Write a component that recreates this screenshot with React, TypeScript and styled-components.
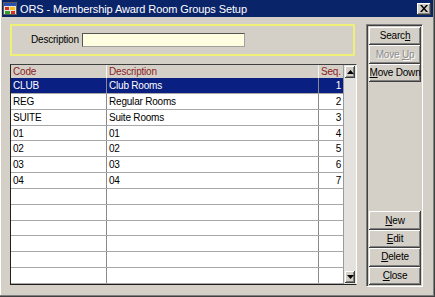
import React from "react";
import styled, { createGlobalStyle, css } from "styled-components";

const GlobalStyle = createGlobalStyle`
  html, body {
    margin: 0;
    padding: 0;
    background: #d4d0c8;
  }
  body {
    font-family: "Liberation Sans", Arial, sans-serif;
    font-size: 10px;
    letter-spacing: -0.2px;
    color: #000;
  }
`;

const face = "#d4d0c8";
const shadow = "#808080";
const darkShadow = "#404040";

const Frame = styled.div`
  width: 435px;
  height: 297px;
  box-sizing: border-box;
  padding: 0 2px 2px 2px;
  background: ${face};
  box-shadow: inset -1px -1px ${darkShadow}, inset -2px -2px ${shadow},
    inset 1px 0 #ffffff;
  display: flex;
  flex-direction: column;
`;

const TitleBar = styled.div`
  height: 17px;
  background: #0a246a;
  display: flex;
  align-items: center;
  padding: 0 2px 0 1px;
  gap: 2px;
`;

const TitleText = styled.div`
  flex: 1;
  color: #ffffff;
  font-size: 11px;
  letter-spacing: -0.1px;
  white-space: nowrap;
`;

const CloseBox = styled.div`
  width: 14px;
  height: 12px;
  background: ${face};
  box-shadow: inset -1px -1px ${darkShadow}, inset 1px 1px #ffffff,
    inset -2px -2px ${shadow};
  display: flex;
  align-items: center;
  justify-content: center;
`;

const Body = styled.div`
  flex: 1;
  display: flex;
  padding: 7px 10px 8px 8px;
  gap: 9px;
`;

const LeftColumn = styled.div`
  width: 347px;
  display: flex;
  flex-direction: column;
  gap: 8px;
`;

const SearchBox = styled.div`
  width: 345px;
  height: 32px;
  box-sizing: border-box;
  border: 2px solid #f0ef78;
  display: flex;
  align-items: center;
  padding: 0 0 1px 19px;
  gap: 3px;
`;

const Label = styled.label`
  font-size: 10px;
`;

const TextInput = styled.div`
  width: 163px;
  height: 14px;
  box-sizing: border-box;
  background: #fffee0;
  border: 1px solid;
  border-color: #555555 #a0a0a0 #a0a0a0 #555555;
`;

const Grid = styled.div`
  height: 221px;
  box-sizing: border-box;
  border: 1px solid;
  border-color: #404040 #ffffff #202020 #202020;
  display: flex;
  background: #ffffff;
`;

const RowsArea = styled.div`
  flex: 1;
  display: flex;
  flex-direction: column;
`;

const Row = styled.div<{ $header?: boolean; $selected?: boolean }>`
  display: grid;
  grid-template-columns: 96px 212px 24px;
  height: 15.85px;
  box-sizing: border-box;
  border-bottom: 1px solid #a8a8a8;
  ${({ $header }) =>
    $header &&
    css`
      height: 13px;
      background: ${face};
      border-bottom: none;
      color: #8c1c1c;
    `}
  ${({ $selected }) =>
    $selected &&
    css`
      background: #0a1f82;
      color: #ffffff;
    `}
`;

const Cell = styled.div<{ $right?: boolean; $header?: boolean }>`
  padding: 0 2px 0 2px;
  line-height: 15px;
  white-space: nowrap;
  overflow: hidden;
  border-right: 1px solid ${({ $header }) => ($header ? "#f4f4f4" : "#8a8a8a")};
  text-align: ${({ $right }) => ($right ? "right" : "left")};
  ${({ $header }) =>
    $header &&
    css`
      line-height: 13px;
    `}
  &:last-child {
    border-right: none;
  }
`;

const ScrollBar = styled.div`
  width: 13px;
  background: #e4e2de;
  border-left: 1px solid #9a9a9a;
  box-sizing: border-box;
  display: flex;
  flex-direction: column;
  justify-content: space-between;
  padding: 1px;
`;

const ScrollButton = styled.div`
  height: 12px;
  background: ${face};
  box-shadow: inset -1px -1px ${darkShadow}, inset 1px 1px #ffffff,
    inset -2px -2px ${shadow};
  display: flex;
  align-items: center;
  justify-content: center;
`;

const ButtonPanel = styled.div`
  width: 57px;
  box-sizing: border-box;
  border: 1px solid;
  border-color: #808080 #ffffff #ffffff #808080;
  box-shadow: inset 1px 1px #404040;
  padding: 2px 1px 1px 2px;
  display: flex;
  flex-direction: column;
`;

const ButtonGroup = styled.div<{ $bottom?: boolean }>`
  display: flex;
  flex-direction: column;
  margin-top: ${({ $bottom }) => ($bottom ? "auto" : "0")};
`;

const Button = styled.div<{ $disabled?: boolean }>`
  height: 18.4px;
  box-sizing: border-box;
  background: ${face};
  box-shadow: inset -1px -1px ${darkShadow}, inset 1px 1px #ffffff,
    inset -2px -2px ${shadow};
  display: flex;
  align-items: center;
  justify-content: center;
  padding-bottom: 1px;
  font-size: 10px;
  white-space: pre;
  ${({ $disabled }) =>
    $disabled &&
    css`
      color: #8c8c8c;
      text-shadow: 1px 1px #ffffff;
    `}
`;

const Key = styled.span`
  text-decoration: underline;
`;

type Item = { code: string; description: string; seq: string };

const items: Item[] = [
  { code: "CLUB", description: "Club Rooms", seq: "1" },
  { code: "REG", description: "Regular Rooms", seq: "2" },
  { code: "SUITE", description: "Suite Rooms", seq: "3" },
  { code: "01", description: "01", seq: "4" },
  { code: "02", description: "02", seq: "5" },
  { code: "03", description: "03", seq: "6" },
  { code: "04", description: "04", seq: "7" },
];

const rows: Item[] = [
  ...items,
  ...Array.from({ length: 6 }, () => ({ code: "", description: "", seq: "" })),
];

const AppIcon = () => (
  <svg width="15" height="15" viewBox="0 0 15 15">
    <rect x="0.5" y="1.5" width="13" height="12" fill="#e8e4d8" stroke="#5a5a5a" />
    <rect x="1" y="2" width="12" height="3" fill="#2a50b0" />
    <rect x="2" y="6" width="4" height="3" fill="#d83020" />
    <rect x="7" y="6" width="5" height="3" fill="#f0c020" />
    <rect x="2" y="10" width="5" height="3" fill="#30a030" />
    <rect x="8" y="10" width="4" height="3" fill="#d83020" />
  </svg>
);

const CloseGlyph = () => (
  <svg width="8" height="7" viewBox="0 0 8 7">
    <path d="M0 0h2l2 2.5L6 0h2L5 3.5 8 7H6L4 4.5 2 7H0l3-3.5z" fill="#000" />
  </svg>
);

const Arrow = ({ up }: { up?: boolean }) => (
  <svg width="7" height="4" viewBox="0 0 7 4">
    <path d={up ? "M3.5 0L7 4H0z" : "M0 0h7L3.5 4z"} fill="#000" />
  </svg>
);

export default function App() {
  return (
    <>
      <GlobalStyle />
      <Frame>
        <TitleBar>
          <AppIcon />
          <TitleText>ORS - Membership Award Room Groups Setup</TitleText>
          <CloseBox>
            <CloseGlyph />
          </CloseBox>
        </TitleBar>
        <Body>
          <LeftColumn>
            <SearchBox>
              <Label>Description</Label>
              <TextInput />
            </SearchBox>
            <Grid>
              <RowsArea>
                <Row $header>
                  <Cell $header>Code</Cell>
                  <Cell $header>Description</Cell>
                  <Cell $header>Seq.</Cell>
                </Row>
                {rows.map((r, i) => (
                  <Row key={i} $selected={i === 0}>
                    <Cell>{r.code}</Cell>
                    <Cell>{r.description}</Cell>
                    <Cell $right>{r.seq}</Cell>
                  </Row>
                ))}
              </RowsArea>
              <ScrollBar>
                <ScrollButton>
                  <Arrow up />
                </ScrollButton>
                <ScrollButton>
                  <Arrow />
                </ScrollButton>
              </ScrollBar>
            </Grid>
          </LeftColumn>
          <ButtonPanel>
            <ButtonGroup>
              <Button>
                Searc<Key>h</Key>
              </Button>
              <Button $disabled>
                {"Move "}
                <Key>U</Key>p
              </Button>
              <Button>
                <Key>M</Key>
                {"ove Down"}
              </Button>
            </ButtonGroup>
            <ButtonGroup $bottom>
              <Button>
                <Key>N</Key>ew
              </Button>
              <Button>
                <Key>E</Key>dit
              </Button>
              <Button>
                <Key>D</Key>elete
              </Button>
              <Button>
                <Key>C</Key>lose
              </Button>
            </ButtonGroup>
          </ButtonPanel>
        </Body>
      </Frame>
    </>
  );
}
